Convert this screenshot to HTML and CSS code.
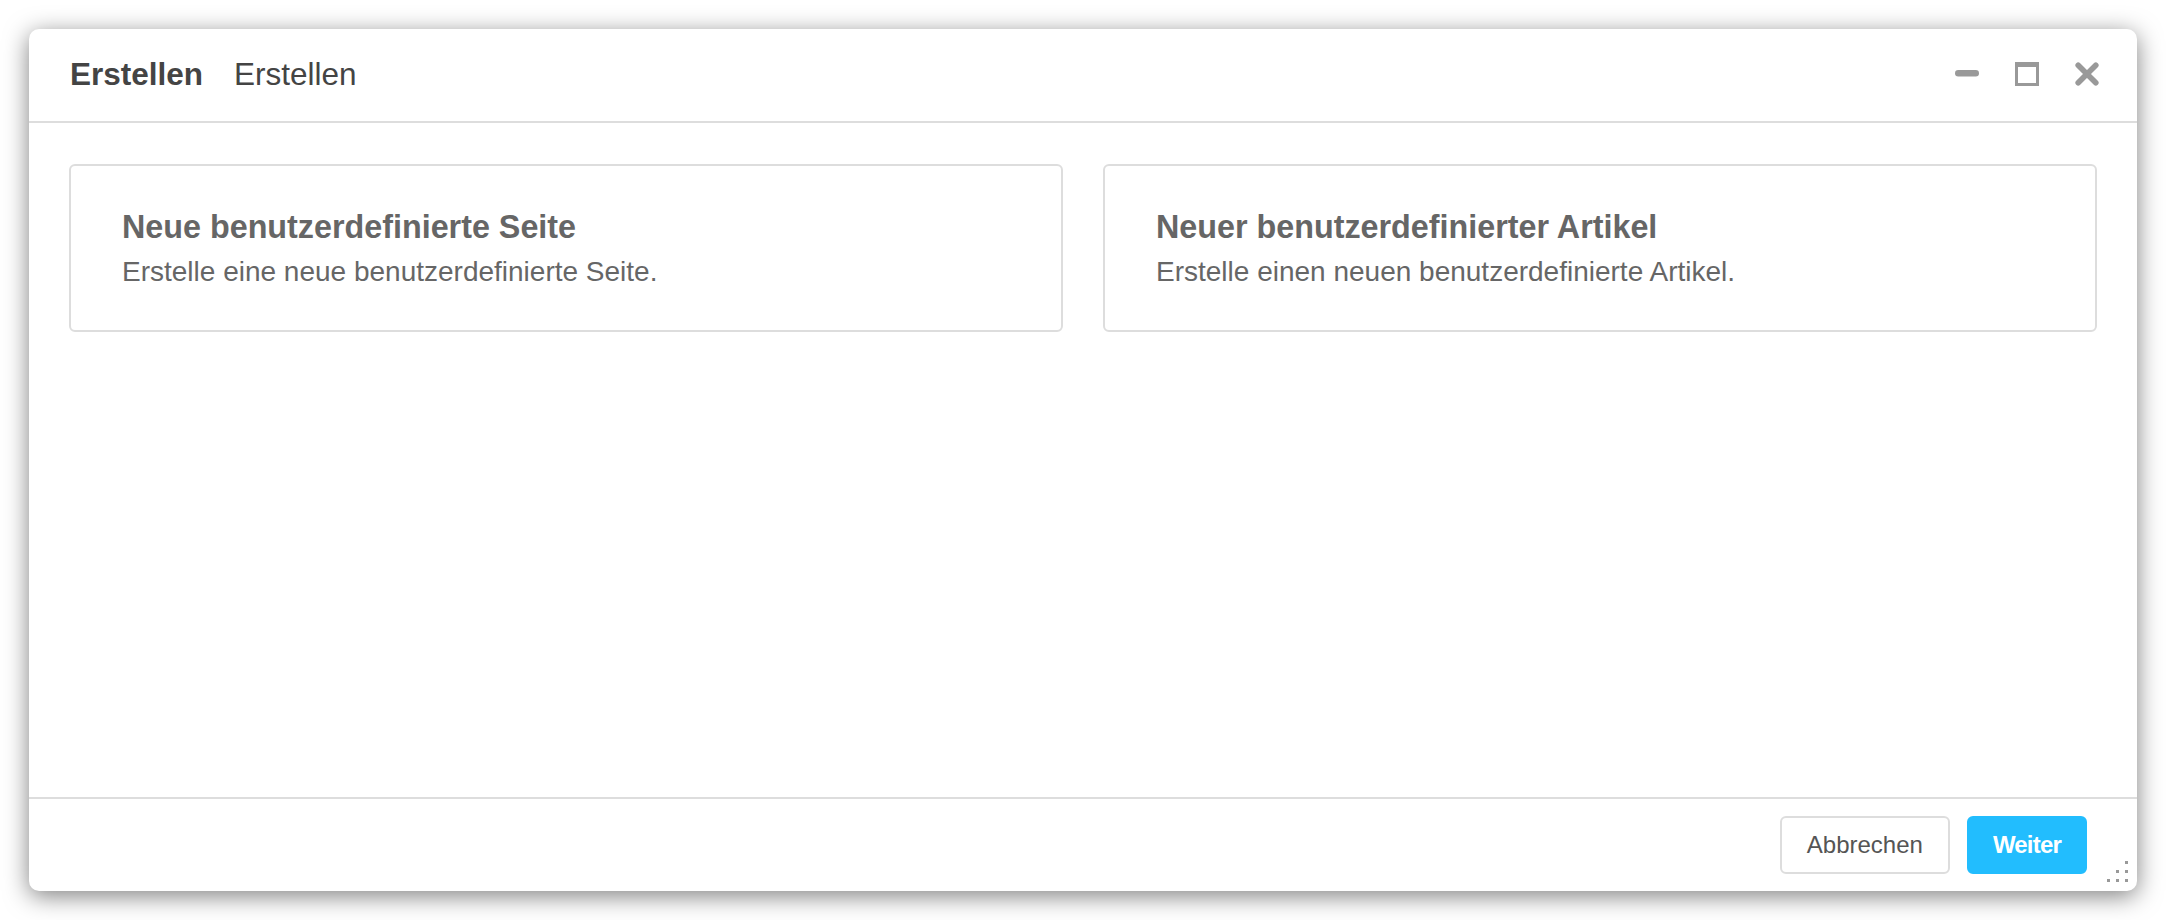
FILE: index.html
```html
<!DOCTYPE html>
<html lang="de">
<head>
<meta charset="utf-8">
<title>Erstellen</title>
<link rel="stylesheet" href="styles.css">
</head>
<body>
<div class="dialog">
  <div class="header">
    <div class="titles">
      <span class="title-main">Erstellen</span>
      <span class="title-sub">Erstellen</span>
    </div>
    <div class="controls">
      <svg class="ctl" width="24" height="24" viewBox="0 0 24 24"><rect x="0" y="8" width="24" height="6.5" rx="3.25" fill="#999"/></svg>
      <svg class="ctl" width="24" height="24" viewBox="0 0 24 24"><path d="M0 0H24V24H0Z M3 5H21V21H3Z" fill="#999" fill-rule="evenodd"/></svg>
      <svg class="ctl" width="24" height="24" viewBox="0 0 24 24"><path d="M3.2 3.2L20.8 20.8M20.8 3.2L3.2 20.8" stroke="#999" stroke-width="5.6" stroke-linecap="round"/></svg>
    </div>
  </div>
  <div class="body">
    <div class="card">
      <div class="card-title">Neue benutzerdefinierte Seite</div>
      <div class="card-desc">Erstelle eine neue benutzerdefinierte Seite.</div>
    </div>
    <div class="card">
      <div class="card-title">Neuer benutzerdefinierter Artikel</div>
      <div class="card-desc">Erstelle einen neuen benutzerdefinierte Artikel.</div>
    </div>
  </div>
  <div class="footer">
    <button class="btn btn-cancel">Abbrechen</button>
    <button class="btn btn-primary">Weiter</button>
  </div>
  <svg class="grip" width="21" height="21" viewBox="0 0 21 21">
    <rect x="18" y="0" width="3" height="3" fill="#999"/>
    <rect x="9" y="9" width="3" height="3" fill="#999"/>
    <rect x="18" y="9" width="3" height="3" fill="#999"/>
    <rect x="0" y="18" width="3" height="3" fill="#999"/>
    <rect x="9" y="18" width="3" height="3" fill="#999"/>
    <rect x="18" y="18" width="3" height="3" fill="#999"/>
  </svg>
</div>
</body>
</html>
```

FILE: styles.css
```css
* { box-sizing: border-box; }
html, body { margin: 0; height: 100%; }
body {
  background: #fff;
  padding: 29px;
  font-family: "Liberation Sans", Arial, Helvetica, sans-serif;
}
.dialog {
  position: relative;
  height: 100%;
  display: flex;
  flex-direction: column;
  background: #fff;
  border-radius: 10px;
  box-shadow: 0 5px 24px rgba(0, 0, 0, 0.5);
}
.header {
  height: 94px;
  flex: none;
  display: flex;
  align-items: center;
  padding: 0 38px 3px 41px;
  border-bottom: 2px solid #ddd;
}
.titles {
  display: flex;
  gap: 31px;
  font-size: 31.5px;
  color: #444;
  line-height: 40px;
}
.title-main { font-weight: bold; }
.controls {
  margin-left: auto;
  display: flex;
  align-items: center;
  gap: 36px;
}
.ctl { display: block; }
.body {
  flex: 1;
  padding: 41px 40px;
  display: grid;
  grid-template-columns: 1fr 1fr;
  column-gap: 40px;
  align-items: start;
}
.card {
  border: 2px solid #ddd;
  border-radius: 6px;
  padding: 37px 50px 37px 51px;
  color: #666;
}
.card-title {
  font-size: 32.3px;
  font-weight: bold;
  line-height: 48px;
}
.card-desc {
  font-size: 28px;
  line-height: 42px;
}
.footer {
  height: 94px;
  flex: none;
  display: flex;
  justify-content: flex-end;
  align-items: center;
  gap: 17px;
  padding: 0 50px 0 0;
  border-top: 2px solid #ddd;
}
.btn {
  height: 58px;
  border-radius: 6px;
  font-family: "Liberation Sans", Arial, Helvetica, sans-serif;
  font-size: 24px;
  cursor: pointer;
}
.btn-cancel {
  background: #fff;
  border: 2px solid #ddd;
  color: #555;
  padding: 0 25px;
}
.btn-primary {
  background: #22bdfe;
  border: 2px solid #22bdfe;
  color: #fff;
  font-weight: bold;
  letter-spacing: -0.8px;
  padding: 0 24px;
}
.grip {
  position: absolute;
  right: 9px;
  bottom: 9px;
  display: block;
}
```
